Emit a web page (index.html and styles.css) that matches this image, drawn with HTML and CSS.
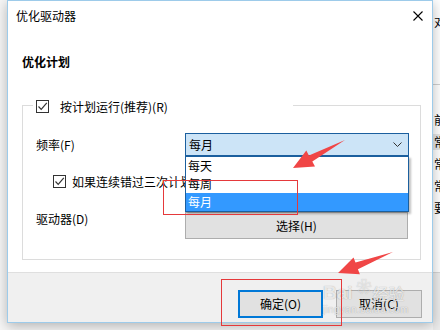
FILE: index.html
```html
<!DOCTYPE html>
<html lang="zh-CN">
<head>
<meta charset="utf-8">
<title>优化驱动器</title>
<link rel="stylesheet" href="styles.css">
</head>
<body>
<div class="bgwin">
  <div class="bg-top">对</div>
  <div class="bg-list">
    <div class="bg-item">前</div>
    <div class="bg-item sel">常</div>
    <div class="bg-item">常</div>
    <div class="bg-item">常</div>
    <div class="bg-item">要</div>
  </div>
  <div class="bg-foot"></div>
</div>

<div class="dialog">
  <div class="titlebar">
    <span class="title">优化驱动器</span>
    <svg class="close" width="10" height="10" viewBox="0 0 10 10"><path d="M0.5 0.5L9.5 9.5M9.5 0.5L0.5 9.5" stroke="#000" stroke-width="1.1" fill="none"/></svg>
  </div>
  <div class="content">
    <div class="heading">优化计划</div>
    <div class="group">
      <div class="legend">
        <span class="cb"><svg width="11" height="11" viewBox="0 0 11 11"><path d="M1.5 5.5L4.2 8.3L9.8 1.8" stroke="#333" stroke-width="1.2" fill="none"/></svg></span>
        <span class="legend-text">按计划运行(推荐)(R)</span>
      </div>
      <div class="row freq">
        <span class="lbl">频率(F)</span>
        <div class="combo">
          <div class="combo-head">
            <span>每月</span>
            <svg class="chev" width="9" height="5" viewBox="0 0 9 5"><path d="M0.5 0.5L4.5 4.5L8.5 0.5" stroke="#333" stroke-width="1" fill="none"/></svg>
          </div>
          <div class="dropdown">
            <div class="opt">每天</div>
            <div class="opt">每周</div>
            <div class="opt active">每月</div>
          </div>
        </div>
      </div>
      <div class="row notify">
        <span class="cb"><svg width="11" height="11" viewBox="0 0 11 11"><path d="M1.5 5.5L4.2 8.3L9.8 1.8" stroke="#333" stroke-width="1.2" fill="none"/></svg></span>
        <span class="notify-text">如果连续错过三次计划运行，则通知我</span>
      </div>
      <div class="row drive">
        <span class="lbl">驱动器(D)</span>
        <button class="btn wide">选择(H)</button>
      </div>
    </div>
  </div>
  <div class="footer">
    <button class="btn primary">确定(O)</button>
    <button class="btn">取消(C)</button>
  </div>
</div>

<div class="watermark">
  <div class="wm-main"><span class="wm-bai">Bai</span><span class="wm-paw">❀</span><span class="wm-jy">经验</span></div>
  <div class="wm-url">jingyan.baidu.com</div>
</div>

<svg class="annot" width="440" height="330" viewBox="0 0 440 330">
  <rect x="163.5" y="180.5" width="134" height="34" fill="none" stroke="#e5393b" stroke-width="1"/>
  <rect x="221.5" y="279.5" width="120" height="46" fill="none" stroke="#e5393b" stroke-width="1"/>
  <polygon points="345,140 312.3,161.6 315,166.4 293,168 306.3,150.6 308.9,155.4" fill="#f04646"/>
  <polygon points="393,252 357.9,269.2 359.9,274.3 338,273 353.5,257.5 355.5,262.6" fill="#f04646"/>
</svg>
</body>
</html>
```

FILE: styles.css
```css
* { box-sizing: border-box; }

html, body {
  margin: 0;
  padding: 0;
}

body {
  width: 440px;
  height: 330px;
  overflow: hidden;
  background: #f6f6f6;
  padding-left: 7px;
  font-family: "Noto Sans CJK SC", "Noto Sans", sans-serif;
  font-size: 12px;
  color: #000;
  position: relative;
}

/* background window peeking at the right */
.bgwin {
  position: absolute;
  left: 433px;
  top: 0;
  width: 7px;
  height: 330px;
  overflow: hidden;
  background: #fff;
  display: flex;
  flex-direction: column;
  white-space: nowrap;
}
.bg-top {
  height: 85px;
  padding-top: 14px;
  line-height: 16px;
  padding-left: 1px;
  border-bottom: 1px solid #d0d0d0;
}
.bg-list {
  padding-top: 24px;
  height: 187px;
}
.bg-item {
  height: 22px;
  line-height: 22px;
  padding-left: 1px;
}
.bg-item.sel { background: #e6e6e6; height: 16px; line-height: 16px; margin: 3px 0; }
.bg-foot {
  flex: 1;
  background: #ececec;
  border-top: 1px solid #d6d6d6;
}

.dialog {
  position: relative;
  width: 426px;
  height: 323px;
  background: #fff;
  border: 1px solid #9dcbea;
  box-shadow: 0 3px 12px rgba(0, 0, 0, 0.28);
  display: flex;
  flex-direction: column;
}

.titlebar {
  height: 29px;
  display: flex;
  align-items: center;
  justify-content: space-between;
  padding: 0 9px 0 8px;
}
.title { line-height: 16px; }
.close { display: block; margin-top: 1px; }

.content {
  padding: 0 11px 0 14px;
}
.heading {
  margin-top: 24px;
  font-weight: bold;
  line-height: 16px;
}

.group {
  margin-top: 35px;
  height: 155px;
  border: 1px solid #dcdcdc;
  display: flex;
  flex-direction: column;
}

.legend {
  margin-top: -6px;
  margin-left: 10px;
  width: 260px;
  height: 13px;
  background: #fff;
  display: flex;
  align-items: center;
  padding-left: 3px;
}
.cb {
  width: 13px;
  height: 13px;
  border: 1px solid #333;
  background: #fff;
  display: flex;
  align-items: center;
  justify-content: center;
  flex: none;
}
.cb svg { display: block; }
.legend-text { margin-left: 11px; line-height: 16px; white-space: nowrap; }

.row {
  display: flex;
  align-items: center;
}
.lbl {
  width: 149px;
  flex: none;
  line-height: 16px;
}

.freq {
  margin-top: 20px;
  height: 23px;
  padding-left: 13px;
}
.combo {
  position: relative;
  width: 224px;
  height: 23px;
}
.combo-head {
  height: 23px;
  background: #cce4f7;
  border: 1px solid #1b5f9e;
  display: flex;
  align-items: center;
  justify-content: space-between;
  padding: 0 6px 0 3px;
  line-height: 16px;
}
.chev { display: block; }

.dropdown {
  position: absolute;
  left: 0;
  top: 100%;
  width: 224px;
  background: #fff;
  border: 1px solid #1b5f9e;
  box-shadow: 2px 2px 2px rgba(0, 0, 0, 0.25);
  z-index: 2;
}
.opt {
  height: 18px;
  line-height: 18px;
  padding-left: 2px;
}
.opt.active {
  background: #3399ff;
  color: #fff;
}

.notify {
  margin-top: 19px;
  height: 13px;
  padding-left: 30px;
}
.notify-text {
  margin-left: 6px;
  white-space: nowrap;
  line-height: 16px;
}

.drive {
  margin-top: 24px;
  height: 27px;
  padding-left: 13px;
  align-items: flex-start;
}
.drive .lbl { margin-top: -1px; }

.btn {
  font-family: inherit;
  font-size: 12px;
  color: #000;
  background: #e1e1e1;
  border: 1px solid #adadad;
  padding: 0;
  margin: 0;
  line-height: 16px;
}
.btn.wide {
  width: 223px;
  height: 27px;
}

.footer {
  margin-top: auto;
  height: 50px;
  background: #f0f0f0;
  border-top: 1px solid #dfdfdf;
  display: flex;
  justify-content: flex-end;
  align-items: flex-start;
  gap: 13px;
  padding: 17px 10px 0 0;
}
.footer .btn {
  width: 86px;
  height: 28px;
}
.footer .btn.primary {
  width: 85px;
  border: 2px solid #0078d7;
}

.watermark {
  position: absolute;
  left: 323px;
  top: 277px;
  color: rgba(255, 255, 255, 0.75);
  text-shadow: 0 0 1px rgba(0, 0, 0, 0.35);
  pointer-events: none;
  z-index: 3;
}
.wm-main {
  display: flex;
  align-items: flex-end;
  height: 27px;
}
.wm-bai {
  font-family: "Liberation Sans", sans-serif;
  font-weight: bold;
  font-size: 19px;
  line-height: 22px;
}
.wm-paw {
  font-size: 15px;
  line-height: 18px;
  align-self: flex-start;
  margin: 0 1px 0 4px;
}
.wm-jy {
  font-size: 16px;
  line-height: 22px;
}
.wm-url {
  font-family: "Liberation Sans", sans-serif;
  font-size: 10px;
  line-height: 12px;
  margin-top: 0;
  letter-spacing: 0.3px;
}

.annot {
  position: absolute;
  left: 0;
  top: 0;
  z-index: 4;
  pointer-events: none;
}
```
